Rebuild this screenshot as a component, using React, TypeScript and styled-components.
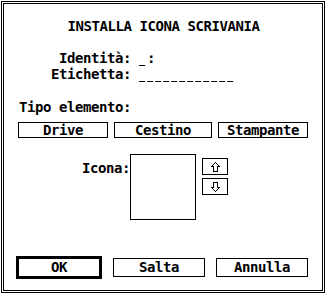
import React from "react";
import styled, { createGlobalStyle } from "styled-components";

const Global = createGlobalStyle`
  html, body { margin: 0; padding: 0; background: #fff; }
  body {
    font-family: "DejaVu Sans Mono", "Liberation Mono", monospace;
    font-weight: bold;
    font-size: 14px;
    letter-spacing: -0.43px;
    line-height: 16px;
    color: #000;
  }
`;

const Outer = styled.div`
  box-sizing: border-box;
  margin: 1px;
  width: 324px;
  height: 292px;
  border: 1px solid #000;
  padding: 1px;
  background: #fff;
`;

const Inner = styled.div`
  box-sizing: border-box;
  height: 100%;
  border: 1px solid #000;
  display: flex;
  flex-direction: column;
`;

const Title = styled.div`
  margin-top: 14px;
  text-align: center;
  height: 16px;
  padding-left: 1px;
`;

const Fields = styled.div`
  margin-top: 16px;
  display: grid;
  grid-template-columns: 127px auto;
  column-gap: 8px;
  grid-auto-rows: 16px;
`;

const FieldLabel = styled.span`
  text-align: right;
`;

const FieldValue = styled.span`
  white-space: pre;
`;

const Blank = styled.span`
  font-size: 10px;
  letter-spacing: 1.98px;
`;

const Section = styled.div<{ $top: number; $left: number }>`
  margin-top: ${(p) => p.$top}px;
  padding-left: ${(p) => p.$left}px;
  height: 16px;
`;

const TypeRow = styled.div`
  margin-top: 7px;
  padding-left: 14px;
  display: flex;
  gap: 6px;
`;

const TypeButton = styled.div<{ $w: number }>`
  box-sizing: border-box;
  width: ${(p) => p.$w}px;
  height: 16px;
  border: 1px solid #000;
  line-height: 14px;
  text-align: center;
`;

const IconRow = styled.div`
  margin-top: 16px;
  padding-left: 78px;
  display: flex;
  align-items: flex-start;
`;

const IconLabel = styled.span`
  margin-top: 6px;
  width: 48px;
`;

const IconBox = styled.div`
  box-sizing: border-box;
  width: 66px;
  height: 66px;
  border: 1px solid #000;
`;

const ArrowColumn = styled.div`
  margin-top: 4px;
  margin-left: 6px;
  display: flex;
  flex-direction: column;
  gap: 3px;
`;

const ArrowButton = styled.div`
  box-sizing: border-box;
  width: 26px;
  height: 17px;
  border: 1px solid #000;
  display: flex;
  align-items: center;
  justify-content: center;
`;

const ButtonRow = styled.div`
  margin-top: 36px;
  padding-left: 12px;
  display: flex;
  align-items: center;
  gap: 11px;
`;

const ExitButton = styled.div<{ $w: number; $default?: boolean }>`
  box-sizing: border-box;
  width: ${(p) => p.$w}px;
  height: ${(p) => (p.$default ? 23 : 19)}px;
  border: ${(p) => (p.$default ? 3 : 1)}px solid #000;
  line-height: 17px;
  text-align: center;
`;

const Arrow = ({ down }: { down?: boolean }) => (
  <svg width="9" height="10" viewBox="0 0 9 10" shapeRendering="crispEdges"
    style={{ transform: down ? "scaleY(-1)" : undefined }}>
    <path d="M4.5 0.5 L8.5 4.5 L6.5 4.5 L6.5 9.5 L2.5 9.5 L2.5 4.5 L0.5 4.5 Z"
      fill="none" stroke="#000" strokeWidth="1" />
  </svg>
);

export default function App() {
  return (
    <>
      <Global />
      <Outer>
        <Inner>
          <Title>INSTALLA ICONA SCRIVANIA</Title>
          <Fields>
            <FieldLabel>Identità:</FieldLabel>
            <FieldValue><Blank>_</Blank>:</FieldValue>
            <FieldLabel>Etichetta:</FieldLabel>
            <FieldValue><Blank>____________</Blank></FieldValue>
          </Fields>
          <Section $top={17} $left={15}>Tipo elemento:</Section>
          <TypeRow>
            <TypeButton $w={90}>Drive</TypeButton>
            <TypeButton $w={98}>Cestino</TypeButton>
            <TypeButton $w={90}>Stampante</TypeButton>
          </TypeRow>
          <IconRow>
            <IconLabel>Icona:</IconLabel>
            <IconBox />
            <ArrowColumn>
              <ArrowButton><Arrow /></ArrowButton>
              <ArrowButton><Arrow down /></ArrowButton>
            </ArrowColumn>
          </IconRow>
          <ButtonRow>
            <ExitButton $w={86} $default>OK</ExitButton>
            <ExitButton $w={92}>Salta</ExitButton>
            <ExitButton $w={92}>Annulla</ExitButton>
          </ButtonRow>
        </Inner>
      </Outer>
    </>
  );
}
